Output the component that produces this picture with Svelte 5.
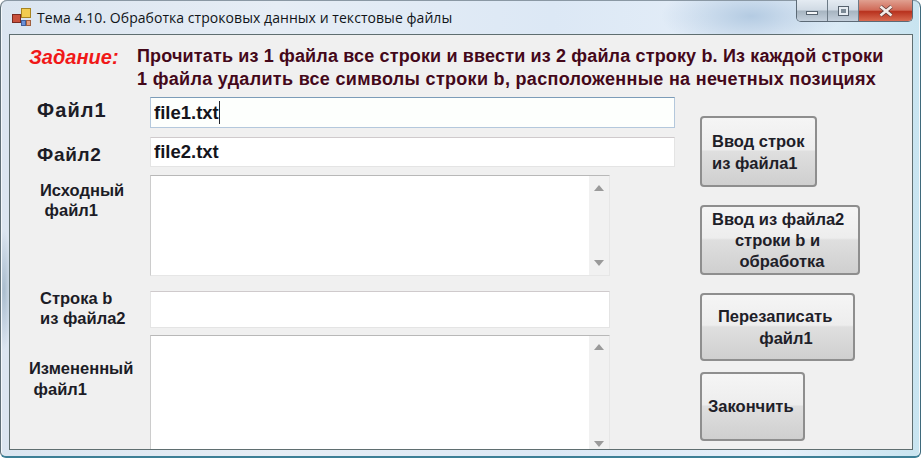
<script>
  const title = "Тема 4.10. Обработка строковых данных и текстовые файлы";
  const task = [
    "Прочитать из 1 файла все строки и ввести из 2 файла строку b. Из каждой строки",
    "1 файла удалить все символы строки b, расположенные на нечетных позициях"
  ];
</script>

<div class="window">
  <header class="titlebar">
    <svg class="app-icon" width="19" height="19" viewBox="0 0 19 19">
      <rect x="0.5" y="6.5" width="8" height="8" fill="#c8503c" stroke="#7a2a20" />
      <rect x="9.5" y="0.5" width="9" height="9" fill="#f2cc50" stroke="#a88420" />
      <rect x="9.5" y="12.5" width="4" height="5" fill="#6c90d8" stroke="#40609c" />
      <rect x="14.5" y="12.5" width="4" height="5" fill="#e8a080" stroke="#a06040" />
    </svg>
    <span class="title">{title}</span>
    <div class="caption">
      <button class="cap min" aria-label="Свернуть"><i></i></button>
      <button class="cap max" aria-label="Развернуть"><i></i></button>
      <button class="cap close" aria-label="Закрыть">
        <svg width="16" height="12" viewBox="0 0 16 12">
          <path d="M2.5 1.5 L13.5 10.5 M13.5 1.5 L2.5 10.5" stroke="#5a3a38" stroke-width="4" />
          <path d="M2.5 1.5 L13.5 10.5 M13.5 1.5 L2.5 10.5" stroke="#f4ece8" stroke-width="2.6" />
        </svg>
      </button>
    </div>
  </header>

  <main class="client">
    <section class="task">
      <span class="task-label">Задание:</span>
      <p class="task-text">
        <span class="line-1">{task[0]}</span>
        <span class="line-2">{task[1]}</span>
      </p>
    </section>

    <div class="body">
      <div class="form">
        <div class="row row-1">
          <span class="label file-label">Файл1</span>
          <div class="input-wrap">
            <input class="field focused" value="file1.txt" readonly />
            <span class="caret"></span>
          </div>
        </div>
        <div class="row row-2">
          <span class="label file-label small">Файл2</span>
          <input class="field wide" value="file2.txt" readonly />
        </div>
        <div class="row row-3">
          <span class="label src">Исходный{"\n"} файл1</span>
          <div class="memo short">
            <div class="memo-text"></div>
            <div class="scroll"><b class="up"></b><b class="down"></b></div>
          </div>
        </div>
        <div class="row row-4">
          <span class="label str">Строка b{"\n"}из файла2</span>
          <input class="field narrow" value="" readonly />
        </div>
        <div class="row row-5">
          <span class="label changed">Измененный{"\n"} файл1</span>
          <div class="memo tall">
            <div class="memo-text"></div>
            <div class="scroll"><b class="up"></b><b class="down"></b></div>
          </div>
        </div>
      </div>

      <div class="actions">
        <button class="btn b1">Ввод строк{"\n"}из файла1</button>
        <button class="btn b2">Ввод из файла2{"\n"}     строки b и{"\n"}      обработка</button>
        <button class="btn b3">Перезаписать{"\n"}         файл1</button>
        <button class="btn b4">Закончить</button>
      </div>
    </div>
  </main>
</div>

<style>
  :global(body) {
    margin: 0;
    overflow: hidden;
    background: #fff;
  }
  .window {
    width: 921px;
    height: 458px;
    box-sizing: border-box;
    padding: 0 7px 0 8px;
    border-left: 1px solid #5f6f78;
    border-right: 1px solid #3f6a7c;
    border-bottom: 2px solid #3d7f96;
    border-radius: 7px 7px 6px 6px;
    overflow: hidden;
    background:
      radial-gradient(ellipse 90px 34px at 750px 16px, #b4cbe2 0%, rgba(180, 203, 226, 0) 100%),
      radial-gradient(ellipse 8px 60px at 3px 290px, #a9bccd 0%, rgba(169, 188, 205, 0) 100%),
      linear-gradient(90deg, #dbe5f0 0%, #e6edf5 30%, #dce8f5 60%, #e6eff9 85%, #c8e4f0 100%);
    display: flex;
    flex-direction: column;
    font-family: "Liberation Sans", Arial, sans-serif;
    box-shadow: inset 0 1px 0 #8a98a4, inset 1px 0 0 #f4f8fb, inset -1px 0 0 #f4f8fb;
  }
  .titlebar {
    height: 34px;
    flex: none;
    display: flex;
    align-items: flex-start;
    margin-left: -8px;
    margin-right: -7px;
  }
  .app-icon {
    margin: 8px 0 0 11px;
    flex: none;
  }
  .title {
    margin: 8px 0 0 6px;
    font: 14px "Open Sans", sans-serif;
    letter-spacing: 0.05px;
    color: #101418;
    white-space: nowrap;
  }
  .caption {
    margin-left: auto;
    margin-right: 7px;
    display: flex;
    height: 22px;
    border: 1px solid #5c6a76;
    border-top: 0;
    border-radius: 0 0 5px 5px;
    overflow: hidden;
    box-sizing: border-box;
    width: 117px;
    flex: none;
  }
  .cap {
    border: 0;
    padding: 0;
    margin: 0;
    display: flex;
    align-items: center;
    justify-content: center;
    background: linear-gradient(180deg, #e4ebf2 0%, #d0dae4 48%, #a6b4c0 52%, #c4d0dc 100%);
  }
  .min { width: 31px; border-right: 1px solid #6c7a86; }
  .max { width: 31px; border-right: 1px solid #6c7a86; }
  .close {
    flex: 1;
    background: linear-gradient(180deg, #e0a090 0%, #d06a58 48%, #b8321e 55%, #d86a50 100%);
  }
  .min i {
    display: block;
    width: 12px;
    height: 4px;
    margin-top: 5px;
    background: #f4f6f8;
    border: 1px solid #56626e;
    box-sizing: border-box;
  }
  .max i {
    display: block;
    width: 11px;
    height: 10px;
    box-sizing: border-box;
    border: 3px solid #e6ecf2;
    outline: 1px solid #56626e;
    outline-offset: -1px;
    background: #7c8a96;
  }
  .client {
    height: 416px;
    flex: none;
    box-sizing: border-box;
    background: #f0f0f0;
    border: 1px solid #5f6e70;
    overflow: hidden;
  }
  .task {
    height: 62px;
    box-sizing: border-box;
    padding: 10px 0 0 19px;
    display: flex;
    font-weight: bold;
  }
  .task-label {
    color: #f01818;
    font-style: italic;
    font-size: 20px;
    line-height: 24px;
    width: 108px;
    flex: none;
  }
  .task-text {
    margin: 0;
    color: #44081a;
    font-size: 18px;
    line-height: 23px;
    white-space: nowrap;
  }
  .task-text span {
    display: block;
  }
  .line-1 { letter-spacing: 0.155px; }
  .line-2 { letter-spacing: 0.31px; }
  .body {
    display: flex;
  }
  .form {
    width: 666px;
    flex: none;
  }
  .row {
    display: flex;
  }
  .row-2 { margin-top: 9px; }
  .row-3 { margin-top: 8px; }
  .row-4 { margin-top: 15px; }
  .row-5 { margin-top: 7px; }
  .label {
    width: 140px;
    flex: none;
    box-sizing: border-box;
    font-weight: bold;
    color: #1c1c26;
    white-space: pre;
  }
  .file-label {
    font-size: 20px;
    letter-spacing: 1.1px;
    padding: 1px 0 0 27px;
    line-height: 24px;
  }
  .file-label.small {
    font-size: 19px;
    letter-spacing: 0.7px;
    padding-top: 6px;
  }
  .src {
    font-size: 16.5px;
    line-height: 20px;
    padding: 5px 0 0 30px;
  }
  .str {
    font-size: 16.5px;
    line-height: 20px;
    margin-top: -3px;
    padding-left: 30px;
  }
  .changed {
    font-size: 16.5px;
    line-height: 21px;
    padding: 23px 0 0 19px;
  }
  .input-wrap {
    position: relative;
    flex: none;
  }
  .field {
    display: block;
    box-sizing: border-box;
    width: 525px;
    height: 30px;
    padding: 0 3px;
    margin: 0;
    border: 1px solid #e4e4e4;
    border-top-color: #cfcacc;
    background: #fff;
    font: bold 18.5px "Liberation Sans", Arial, sans-serif;
    color: #15151c;
    outline: none;
  }
  .field.focused {
    height: 31px;
    border: 1px solid #b4c8dc;
    border-top-color: #7c9cb8;
    background: #fdfffd;
  }
  .field.narrow {
    width: 460px;
    height: 37px;
  }
  .caret {
    position: absolute;
    left: 69px;
    top: 4px;
    width: 1px;
    height: 23px;
    background: #20242c;
  }
  .memo {
    width: 460px;
    box-sizing: border-box;
    display: flex;
    border: 1px solid #e6e6e6;
    border-top-color: #b8b8b8;
    border-left-color: #cccccc;
    background: #fff;
    flex: none;
  }
  .memo.short { height: 101px; }
  .memo.tall { height: 130px; }
  .memo-text { flex: 1; }
  .scroll {
    width: 20px;
    flex: none;
    background: #f1f1f1;
    display: flex;
    flex-direction: column;
    justify-content: space-between;
    align-items: center;
    padding: 9px 0;
    box-sizing: border-box;
  }
  .memo.tall .scroll {
    padding: 8px 0 17px;
  }
  .up, .down {
    display: block;
    width: 0;
    height: 0;
    border-left: 5px solid transparent;
    border-right: 5px solid transparent;
  }
  .up { border-bottom: 6px solid #9a9a9a; }
  .down { border-top: 6px solid #9a9a9a; }
  .actions {
    flex: 1;
    padding: 19px 0 0 24px;
    display: flex;
    flex-direction: column;
    align-items: flex-start;
  }
  .btn {
    box-sizing: border-box;
    border: 2px solid #8e8e8e;
    border-radius: 4px;
    padding: 0;
    margin: 0;
    white-space: pre;
    text-align: left;
    font: bold 16.5px/21px "Liberation Sans", Arial, sans-serif;
    color: #1e2028;
    background: linear-gradient(180deg, #f5f5f5 0%, #ededed 47%, #dfdfdf 50%, #cfcfcf 100%);
  }
  .b1 { width: 117px; height: 71px; padding-left: 10px; line-height: 22px; }
  .b2 { width: 160px; height: 70px; margin-top: 18px; padding-left: 10px; }
  .b3 { width: 155px; height: 68px; margin-top: 18px; padding-left: 16px; line-height: 22px; }
  .b4 { width: 105px; height: 69px; margin-top: 11px; padding-left: 6px; }
</style>
